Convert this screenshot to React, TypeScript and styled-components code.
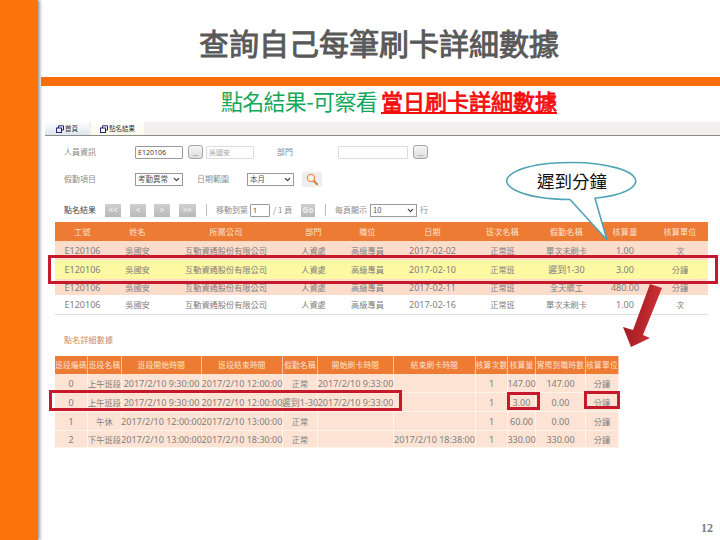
import React from "react";
import styled, { createGlobalStyle } from "styled-components";
import { ChevronDown } from "lucide-react";

const GlobalStyle = createGlobalStyle`
  html, body { margin: 0; padding: 0; background: #fff; }
  body { font-family: "Noto Sans", "Noto Sans CJK TC", sans-serif; }
`;

const CJK = `"Noto Sans CJK TC", "Noto Sans", sans-serif`;
const LATIN = `"Noto Sans", "Noto Sans CJK TC", sans-serif`;

const Page = styled.div`
  position: relative;
  display: flex;
  width: 720px;
  height: 540px;
  overflow: hidden;
  background: #fff;
`;
const Sidebar = styled.div`
  flex: none;
  width: 38px;
  background: #fb7309;
  box-shadow: 2px 0 3px #9b9b9b;
`;
const Main = styled.main`
  flex: 1;
  min-width: 0;
  display: flex;
  flex-direction: column;
`;
const Title = styled.h1`
  height: 77px;
  margin: 0;
  padding-top: 7px;
  box-sizing: border-box;
  display: flex;
  align-items: center;
  justify-content: center;
  font: 400 30px/1 ${CJK};
  -webkit-text-stroke: 0.9px #595959;
  color: #595959;
`;
const Bar = styled.div`
  height: 9px;
  margin-left: 3px;
  background: #f96c0b;
`;
const Subtitle = styled.h2`
  height: 36px;
  margin: 0;
  padding: 0 0 9px 20px;
  box-sizing: border-box;
  display: flex;
  align-items: center;
  justify-content: center;
  font: 400 22px/1 ${CJK};
  letter-spacing: -0.7px;
  color: #12a75b;
`;
const Highlight = styled.span`
  margin-left: 4px;
  letter-spacing: 0;
  -webkit-text-stroke: 0.8px #f40f0f;
  color: #f40f0f;
  text-decoration: underline;
`;
const Sheet = styled.section`
  margin-left: 7px;
`;
const TabBar = styled.div`
  display: flex;
  height: 13px;
  background: #f5f0f0;
  border-bottom: 1px solid #8a8a8a;
`;
const Tab = styled.div<{ $w: number; $tint: string; $ml?: number }>`
  width: ${(p) => p.$w}px;
  margin-left: ${(p) => p.$ml ?? 0}px;
  display: flex;
  align-items: center;
  justify-content: center;
  gap: 1px;
  font: 400 6.5px/1 ${CJK};
  color: #333;
  background: linear-gradient(#fff, ${(p) => p.$tint});
`;
const Form = styled.div`
  padding: 10px 0 0 19px;
`;
const Row = styled.div<{ $mt?: number }>`
  display: flex;
  align-items: center;
  height: 12px;
  margin-top: ${(p) => p.$mt ?? 0}px;
`;
const Label = styled.span<{ $ml?: number; $dark?: boolean; $w?: number }>`
  flex: none;
  width: ${(p) => p.$w ?? 32}px;
  margin-left: ${(p) => p.$ml ?? 0}px;
  font: 400 8px/1 ${CJK};
  white-space: nowrap;
  color: ${(p) => (p.$dark ? "#444" : "#8c8c8c")};
`;
const TextBox = styled.input<{ $w: number; $ml?: number; $faded?: boolean }>`
  flex: none;
  box-sizing: border-box;
  width: ${(p) => p.$w}px;
  height: 13px;
  padding: 0 2px;
  margin: 0 0 0 ${(p) => p.$ml ?? 0}px;
  border: 1px solid ${(p) => (p.$faded ? "#e0dcdc" : "#9a9a9a")};
  border-radius: 1px;
  background: #fff;
  font: 400 7px/1 ${LATIN};
  color: ${(p) => (p.$faded ? "#aaa" : "#444")};
  outline: none;
`;
const Picker = styled.div<{ $w: number; $ml?: number }>`
  flex: none;
  box-sizing: border-box;
  width: ${(p) => p.$w}px;
  height: 13px;
  padding: 0 1px 0 2px;
  margin-left: ${(p) => p.$ml ?? 0}px;
  display: flex;
  align-items: center;
  justify-content: space-between;
  border: 1px solid #9a9a9a;
  background: #fff;
  font: 400 7.5px/1 ${CJK};
  color: #555;
`;
const DotsButton = styled.div<{ $ml?: number }>`
  flex: none;
  width: 15px;
  height: 14px;
  box-sizing: border-box;
  margin-left: ${(p) => p.$ml ?? 0}px;
  display: flex;
  align-items: flex-end;
  justify-content: center;
  border: 1px solid #a5a5a5;
  border-radius: 3px;
  background: linear-gradient(#f6f6f6, #dcdcdc);
  font: 400 7px/9px ${LATIN};
  color: #888;
`;
const SearchButton = styled.div`
  flex: none;
  width: 20px;
  height: 15px;
  margin-left: 8px;
  display: flex;
  align-items: center;
  justify-content: center;
  border-radius: 2px;
  background: #eeeeee;
`;
const Pager = styled.div<{ $ml: number; $w?: number }>`
  flex: none;
  width: ${(p) => p.$w ?? 16}px;
  height: 13px;
  margin-left: ${(p) => p.$ml}px;
  display: flex;
  align-items: center;
  justify-content: center;
  background: linear-gradient(#cfcfcf, #b9b9b9);
  font: 700 8px/1 ${LATIN};
  color: #ececec;
`;
const Separator = styled.div<{ $ml: number }>`
  flex: none;
  width: 1px;
  height: 12px;
  margin-left: ${(p) => p.$ml}px;
  background: #bcbcbc;
`;
const Grid = styled.div<{ $cols: string; $w: number; $ml: number; $mt: number }>`
  width: ${(p) => p.$w}px;
  margin: ${(p) => p.$mt}px 0 0 ${(p) => p.$ml}px;
  display: grid;
  grid-template-columns: ${(p) => p.$cols};
`;
const HeadCell = styled.div<{ $h: number; $lined?: boolean; $size: number }>`
  height: ${(p) => p.$h}px;
  display: flex;
  align-items: center;
  justify-content: center;
  white-space: nowrap;
  overflow: hidden;
  background: #ed7b34;
  box-sizing: border-box;
  border-right: ${(p) => (p.$lined ? "1px solid #f7c4a3" : "none")};
  font: 400 ${(p) => p.$size}px/1 ${CJK};
  letter-spacing: 0.3px;
  color: #fbe3d3;
`;
const BodyCell = styled.div<{ $h: number; $bg: string; $cjk: boolean; $num: number; $lined?: boolean; $rule?: boolean }>`
  height: ${(p) => p.$h}px;
  display: flex;
  align-items: center;
  justify-content: center;
  white-space: nowrap;
  box-sizing: border-box;
  background: ${(p) => p.$bg};
  border-right: ${(p) => (p.$lined ? "1px solid #fff3ea" : "none")};
  border-bottom: ${(p) => (p.$lined ? "1px solid #fff3ea" : p.$rule ? "1px solid #dddddd" : "none")};
  font: 400 ${(p) => (p.$cjk ? 8.2 : p.$num)}px/1 ${(p) => (p.$cjk ? CJK : LATIN)};
  color: #808080;
`;
const SectionLabel = styled.div`
  margin: 19px 0 0 19px;
  height: 12px;
  font: 400 8px/12px ${CJK};
  letter-spacing: 0.2px;
  color: #cf8d60;
`;
const PageNumber = styled.div`
  margin-top: auto;
  padding: 0 7px 6px 0;
  text-align: right;
  font: 700 12px/1 "Liberation Serif", serif;
  color: #7f7f7f;
`;
const Frame = styled.div<{ $x: number; $y: number; $w: number; $h: number }>`
  position: absolute;
  left: ${(p) => p.$x}px;
  top: ${(p) => p.$y}px;
  width: ${(p) => p.$w}px;
  height: ${(p) => p.$h}px;
  box-sizing: border-box;
  border: 3px solid #c6192c;
`;
const Overlay = styled.svg`
  position: absolute;
  left: 0;
  top: 0;
  pointer-events: none;
`;
const CalloutText = styled.div`
  position: absolute;
  left: 507px;
  top: 162px;
  width: 130px;
  height: 37px;
  display: flex;
  align-items: center;
  justify-content: center;
  font: 400 17.5px/1 ${CJK};
  color: #111;
`;

const WindowIcon = () => (
  <svg width="8" height="8" viewBox="0 0 8 8" fill="none" stroke="#24247a" strokeWidth="1">
    <rect x="0.5" y="3" width="5" height="4.5" />
    <path d="M2.5 3V0.8h5v4.2H5.5" />
  </svg>
);

const Magnifier = () => (
  <svg width="13" height="13" viewBox="0 0 13 13" fill="none">
    <circle cx="5" cy="5" r="3.6" stroke="#e9925f" strokeWidth="1.4" fill="#fdf3e3" />
    <path d="M7.6 7.6 11.6 11.8" stroke="#c9803a" strokeWidth="2" />
  </svg>
);

const Select = ({ w, ml, children }: { w: number; ml: number; children: string }) => (
  <Picker $w={w} $ml={ml}>
    {children}
    <ChevronDown size={9} strokeWidth={3} color="#333" />
  </Picker>
);

const summaryCols = "55px 55px 122px 53px 55px 75px 65px 63px 54px 56px";
const summaryHead = ["工號", "姓名", "所屬公司", "部門", "職位", "日期", "班次名稱", "假勤名稱", "核算量", "核算單位"];
const summaryRows: { bg: string; h: number; cells: string[] }[] = [
  { bg: "#fcdccb", h: 19, cells: ["E120106", "吳國安", "互動資通股份有限公司", "人資處", "高級專員", "2017-02-02", "正常班", "單次未刷卡", "1.00", "次"] },
  { bg: "#fdf8a2", h: 19, cells: ["E120106", "吳國安", "互動資通股份有限公司", "人資處", "高級專員", "2017-02-10", "正常班", "遲到1-30", "3.00", "分鐘"] },
  { bg: "#fcdccb", h: 16, cells: ["E120106", "吳國安", "互動資通股份有限公司", "人資處", "高級專員", "2017-02-11", "正常班", "全天曠工", "480.00", "分鐘"] },
  { bg: "#ffffff", h: 20, cells: ["E120106", "吳國安", "互動資通股份有限公司", "人資處", "高級專員", "2017-02-16", "正常班", "單次未刷卡", "1.00", "次"] },
];

const detailCols = "33px 34px 80px 81px 35px 76px 82px 32px 28px 50px 33px";
const detailHead = ["班段編碼", "班段名稱", "班段開始時間", "班段結束時間", "假勤名稱", "開始刷卡時間", "結束刷卡時間", "核算次數", "核算量", "實際到職時數", "核算單位"];
const detailRows: string[][] = [
  ["0", "上午班段", "2017/2/10 9:30:00", "2017/2/10 12:00:00", "正常", "2017/2/10 9:33:00", "", "1", "147.00", "147.00", "分鐘"],
  ["0", "上午班段", "2017/2/10 9:30:00", "2017/2/10 12:00:00", "遲到1-30", "2017/2/10 9:33:00", "", "1", "3.00", "0.00", "分鐘"],
  ["1", "午休", "2017/2/10 12:00:00", "2017/2/10 13:00:00", "正常", "", "", "1", "60.00", "0.00", "分鐘"],
  ["2", "下午班段", "2017/2/10 13:00:00", "2017/2/10 18:30:00", "正常", "", "2017/2/10 18:38:00", "1", "330.00", "330.00", "分鐘"],
];

const hasCjk = (s: string) => /^[\u4e00-\u9fff]+$/.test(s);

export default function App() {
  return (
    <Page>
      <GlobalStyle />
      <Sidebar />
      <Main>
        <Title>查詢自己每筆刷卡詳細數據</Title>
        <Bar />
        <Subtitle>
          點名結果-可察看<Highlight>當日刷卡詳細數據</Highlight>
        </Subtitle>
        <Sheet>
          <TabBar>
            <Tab $w={44} $tint="#dbe6ec"><WindowIcon />首頁</Tab>
            <Tab $w={53} $ml={2} $tint="#fbf9ea"><WindowIcon />點名結果</Tab>
          </TabBar>
          <Form>
            <Row>
              <Label>人員資訊</Label>
              <TextBox $w={48} $ml={39} defaultValue="E120106" />
              <DotsButton $ml={5}>...</DotsButton>
              <TextBox $w={48} $ml={3} $faded defaultValue="吳國安" />
              <Label $ml={23} $w={16}>部門</Label>
              <TextBox $w={70} $ml={45} $faded />
              <DotsButton $ml={5}>...</DotsButton>
            </Row>
            <Row $mt={15}>
              <Label>假勤項目</Label>
              <Select w={48} ml={39}>考勤異常</Select>
              <Label $ml={14}>日期範圍</Label>
              <Select w={47} ml={18}>本月</Select>
              <SearchButton><Magnifier /></SearchButton>
            </Row>
            <Row $mt={19}>
              <Label $dark>點名結果</Label>
              <Pager $ml={9}>{"<<"}</Pager>
              <Pager $ml={9}>{"<"}</Pager>
              <Pager $ml={8}>{">"}</Pager>
              <Pager $ml={9} $w={17}>{">>"}</Pager>
              <Separator $ml={10} />
              <Label $ml={9} $w={31}>移動到第</Label>
              <TextBox $w={20} $ml={3} defaultValue="1" />
              <Label $ml={3} $w={21}>/ 1 頁</Label>
              <Pager $ml={7} $w={14}>Go</Pager>
              <Separator $ml={10} />
              <Label $ml={9} $w={33}>每頁顯示</Label>
              <Select w={47} ml={2}>10</Select>
              <Label $ml={3} $w={8}>行</Label>
            </Row>
          </Form>
          <Grid $cols={summaryCols} $w={653} $ml={10} $mt={6}>
            {summaryHead.map((t) => (
              <HeadCell key={t} $h={19} $size={8}>{t}</HeadCell>
            ))}
            {summaryRows.map((r, i) =>
              r.cells.map((c, j) => (
                <BodyCell key={`${i}-${j}`} $h={r.h} $bg={r.bg} $cjk={hasCjk(c)} $num={9} $rule={i === 3}>
                  {c}
                </BodyCell>
              ))
            )}
          </Grid>
          <SectionLabel>點名詳細數據</SectionLabel>
          <Grid $cols={detailCols} $w={564} $ml={10} $mt={10}>
            {detailHead.map((t) => (
              <HeadCell key={t} $h={18} $size={7.6} $lined>{t}</HeadCell>
            ))}
            {detailRows.map((r, i) =>
              r.map((c, j) => (
                <BodyCell key={`${i}-${j}`} $h={i === 3 ? 17 : 19} $bg="#fde3d3" $cjk={hasCjk(c)} $num={9} $lined>
                  {c}
                </BodyCell>
              ))
            )}
          </Grid>
        </Sheet>
        <PageNumber>12</PageNumber>
      </Main>

      <Frame $x={48} $y={255} $w={670} $h={29} />
      <Frame $x={49} $y={390} $w={353} $h={21} />
      <Frame $x={507} $y={392} $w={33} $h={18} />
      <Frame $x={584} $y={391} $w={36} $h={18} />

      <Overlay width="720" height="540" viewBox="0 0 720 540">
        <defs>
          <linearGradient id="arrowFill" x1="0" y1="0" x2="1" y2="0.35">
            <stop offset="0" stopColor="#8f1a1f" />
            <stop offset="0.6" stopColor="#b5242a" />
            <stop offset="1" stopColor="#d2383a" />
          </linearGradient>
        </defs>
        <path
          d="M570 199.5 A64.5 18.5 0 1 1 595 198.2 L607 240 Z"
          fill="#fff"
          stroke="#4fa3b5"
          strokeWidth="1.6"
        />
        <path d="M650 284 L662 288 L643 335 L650 338 L631 347 L623 327 L633 330 Z" fill="url(#arrowFill)" />
      </Overlay>
      <CalloutText>遲到分鐘</CalloutText>
    </Page>
  );
}
